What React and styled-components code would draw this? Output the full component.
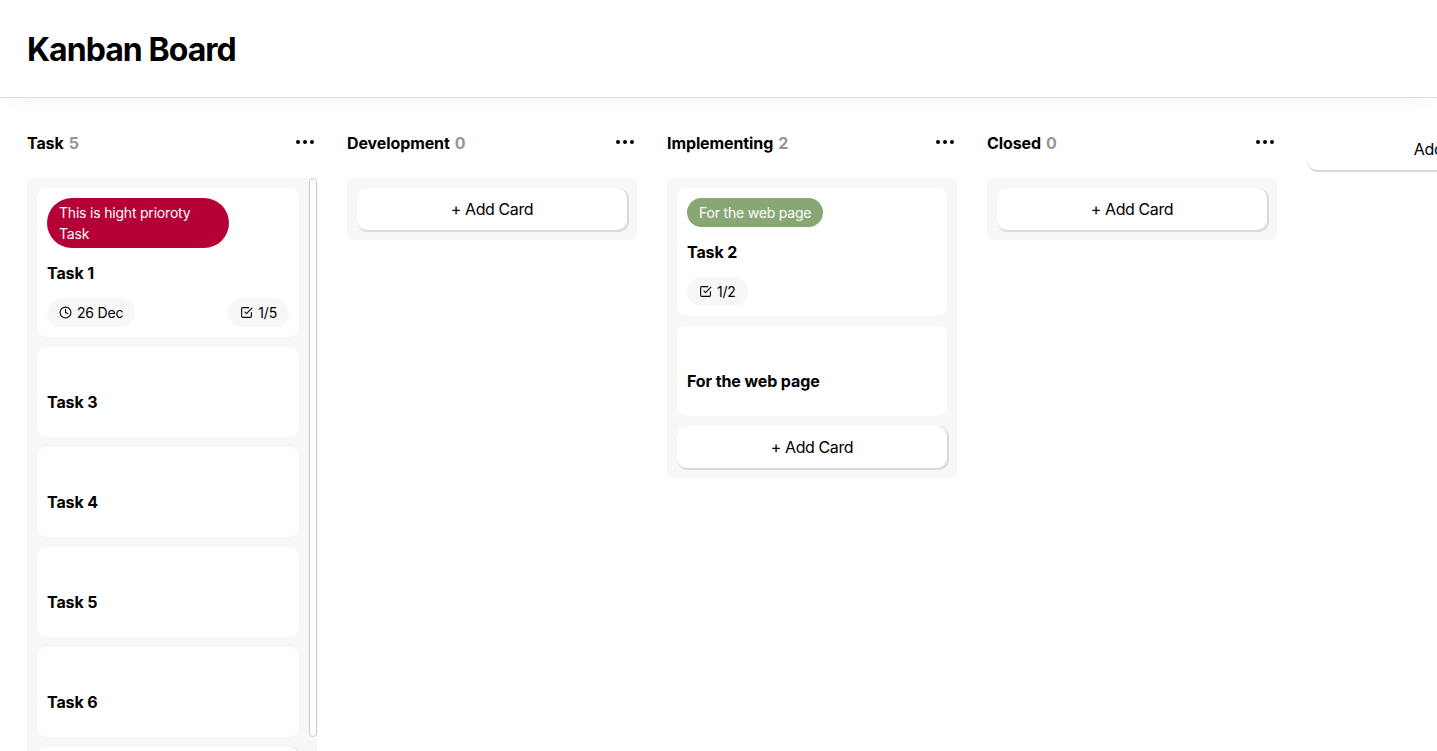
import React from "react";
import styled, { createGlobalStyle } from "styled-components";
import { FiCheckSquare, FiClock, FiMoreHorizontal } from "react-icons/fi";

const GlobalStyle = createGlobalStyle`
  * { box-sizing: border-box; }
  body {
    margin: 0;
    background: #fff;
    color: #000;
    font-family: Inter, "Liberation Sans", sans-serif;
    overflow: hidden;
  }
`;

const Page = styled.div`
  display: flex;
  flex-direction: column;
  width: 100%;
  height: 100vh;
  overflow: hidden;
`;

const Header = styled.header`
  flex: none;
  height: 98px;
  padding: 0 27px;
  border-bottom: 1px solid #e0e0e0;
  box-shadow: 0 10px 20px -10px rgba(0, 0, 0, 0.06);
`;

const Title = styled.h1`
  margin: 0;
  font-size: 32px;
  line-height: 99px;
  font-weight: 700;
  letter-spacing: -0.95px;
`;

const Board = styled.main`
  display: flex;
  align-items: flex-start;
  gap: 30px;
  padding: 30px 27px 0;
`;

const Column = styled.section`
  flex: 0 0 290px;
`;

const ColumnHeader = styled.div`
  display: flex;
  justify-content: space-between;
  height: 50px;
  line-height: 31px;
`;

const ColumnName = styled.h2`
  display: flex;
  gap: 5px;
  margin: 0;
  font-size: 16px;
  font-weight: 700;
  letter-spacing: -0.1px;
`;

const Count = styled.span`
  color: #969696;
`;

const DotsIcon = styled(FiMoreHorizontal)`
  width: 24px;
  height: 24px;
  margin: 2px 0 0;
  fill: #000;
`;

const ColumnBody = styled.div`
  display: flex;
  align-items: flex-start;
  border-radius: 5px;
  background: #f7f7f7;
`;

const CardList = styled.div`
  flex: 1;
  min-width: 0;
  display: flex;
  flex-direction: column;
  gap: 10px;
  padding: 10px;
`;

const ScrollThumb = styled.div`
  flex: none;
  width: 8px;
  height: 559px;
  border: 1px solid #c8c8c8;
  border-radius: 5px;
  background: #fff;
`;

const CardBox = styled.article`
  padding: 10px;
  border-radius: 10px;
  background: #fff;
`;

const CardTop = styled.div`
  display: flex;
  min-height: 20px;
`;

const Chip = styled.span`
  display: inline-flex;
  align-items: center;
  gap: 5px;
  max-width: 182px;
  padding: 4px 12px;
  border-radius: 25px;
  background: ${(p) => p.$color || "#f7f7f7"};
  color: ${(p) => (p.$color ? "#fff" : "#000")};
  font-size: 14px;
  line-height: 21px;
  letter-spacing: -0.2px;
`;

const CardTitle = styled.h3`
  margin: 0;
  font-size: 16px;
  line-height: 50px;
  font-weight: 700;
  letter-spacing: -0.1px;
`;

const CardFooter = styled.div`
  display: flex;
  justify-content: space-between;
`;

const AddButton = styled.button`
  flex: none;
  width: ${(p) => p.$width || "100%"};
  height: 42px;
  padding: 0;
  border: 0;
  border-radius: 10px;
  background: #fff;
  box-shadow: 1px 1px 0 1px #d9d9d9;
  color: #000;
  font: 400 16px/42px Inter, "Liberation Sans", sans-serif;
  letter-spacing: -0.4px;
`;

const columns = [
  {
    name: "Task",
    scroll: true,
    cards: [
      { title: "Task 1", label: "This is hight prioroty Task", color: "#b50036", date: "26 Dec", progress: "1/5" },
      { title: "Task 3" },
      { title: "Task 4" },
      { title: "Task 5" },
      { title: "Task 6" },
    ],
  },
  { name: "Development", cards: [] },
  {
    name: "Implementing",
    cards: [
      { title: "Task 2", label: "For the web page", color: "#88a774", progress: "1/2" },
      { title: "For the web page" },
    ],
  },
  { name: "Closed", cards: [] },
];

function Card({ card }) {
  return (
    <CardBox>
      <CardTop>{card.label && <Chip $color={card.color}>{card.label}</Chip>}</CardTop>
      <CardTitle>{card.title}</CardTitle>
      <CardFooter>
        {card.date && <Chip><FiClock size={13} />{card.date}</Chip>}
        {card.progress && <Chip><FiCheckSquare size={13} />{card.progress}</Chip>}
      </CardFooter>
    </CardBox>
  );
}

export default function App() {
  return (
    <Page>
      <GlobalStyle />
      <Header><Title>Kanban Board</Title></Header>
      <Board>
        {columns.map((col) => (
          <Column key={col.name}>
            <ColumnHeader>
              <ColumnName>{col.name}<Count>{col.cards.length}</Count></ColumnName>
              <DotsIcon />
            </ColumnHeader>
            <ColumnBody>
              <CardList>
                {col.cards.map((card) => <Card key={card.title} card={card} />)}
                <AddButton>+ Add Card</AddButton>
              </CardList>
              {col.scroll && <ScrollThumb />}
            </ColumnBody>
          </Column>
        ))}
        <AddButton $width="290px">Add Board</AddButton>
      </Board>
    </Page>
  );
}
